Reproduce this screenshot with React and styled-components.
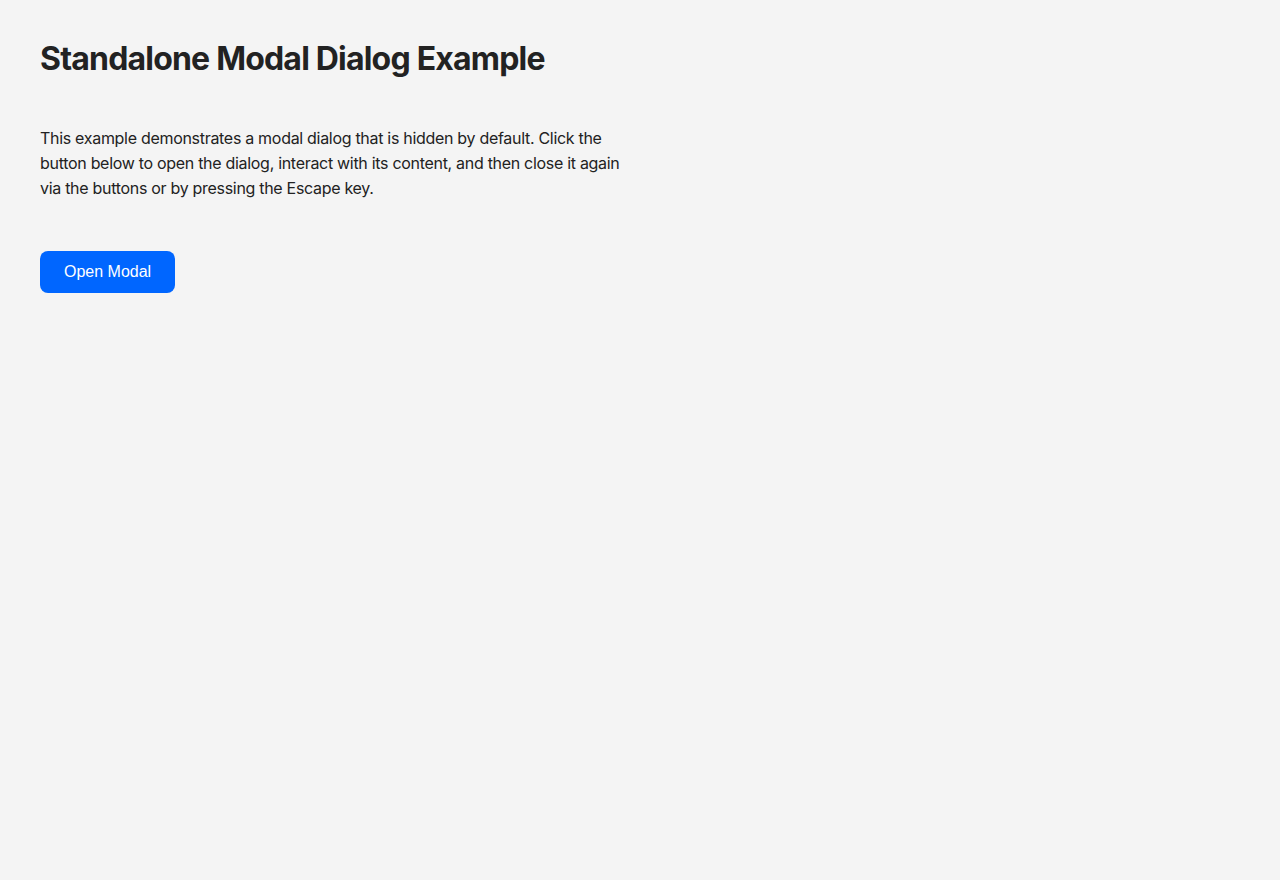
import React from "react";
import styled, { createGlobalStyle } from "styled-components";

const Global = createGlobalStyle`
  html, body { margin: 0; padding: 0; background: #f4f4f4; }
  body { font-family: Inter, "Noto Sans", sans-serif; color: #222; }
`;

const Page = styled.main`
  padding: 40px;
  min-height: 880px;
  box-sizing: border-box;
`;

const Title = styled.h1`
  margin: 0 0 48px;
  font-size: 32px;
  line-height: 38px;
  font-weight: 700;
  color: #222;
  letter-spacing: -0.8px;
`;

const Lead = styled.p`
  margin: 0 0 50px;
  max-width: 600px;
  font-size: 16px;
  line-height: 25px;
  letter-spacing: -0.3px;
  color: #222;
`;

const PrimaryButton = styled.button`
  display: inline-flex;
  align-items: center;
  justify-content: center;
  height: 42px;
  padding: 0 24px;
  border: none;
  border-radius: 8px;
  background: #0066ff;
  color: #fff;
  font-family: "Liberation Sans", Arial, sans-serif;
  font-size: 16px;
  cursor: pointer;
`;

export default function App() {
  return (
    <>
      <Global />
      <Page>
        <Title>Standalone Modal Dialog Example</Title>
        <Lead>
          This example demonstrates a modal dialog that is hidden by default. Click the
          button below to open the dialog, interact with its content, and then close it
          again via the buttons or by pressing the Escape key.
        </Lead>
        <PrimaryButton type="button">Open Modal</PrimaryButton>
      </Page>
    </>
  );
}
